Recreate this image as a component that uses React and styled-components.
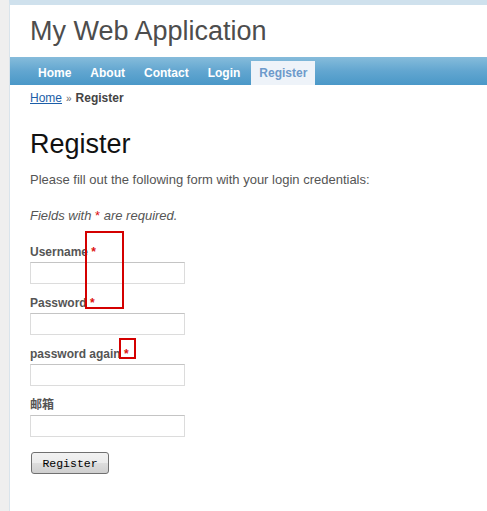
import React from 'react'
import styled, { createGlobalStyle } from 'styled-components'

const GlobalStyle = createGlobalStyle`
  html, body {
    margin: 0;
    padding: 0;
    background: #efefef;
    font-family: "Liberation Sans", Arial, sans-serif;
    font-size: 12px;
    color: #555;
  }
`;

const Page = styled.div`
  margin-left: 9px;
  min-height: 511px;
  background: #fff;
  border-left: 1px solid #d9e4ec;
  border-top: 5px solid #cfe1ed;
  position: relative;
`;

const Header = styled.div`
  height: 52px;
  display: flex;
  align-items: center;
  padding-left: 20px;
`;

const Logo = styled.div`
  font-size: 27px;
  color: #4d4d4d;
  margin-top: 1px;
`;

const MainMenu = styled.ul`
  list-style: none;
  margin: 0;
  padding: 4px 20px 0 20px;
  height: 24px;
  display: flex;
  align-items: stretch;
  gap: 3px;
  background: linear-gradient(to bottom, #86bcdb 0%, #62a6d0 50%, #4a98c8 100%);
`;

const MenuItem = styled.li`
  display: flex;
  align-items: center;
  padding: 0 8px;
  font-size: 12px;
  font-weight: bold;
  color: ${({ $active }) => ($active ? '#6d9acb' : '#fff')};
  background: ${({ $active }) => ($active ? '#eef3f9' : 'transparent')};
`;

const Breadcrumbs = styled.div`
  padding: 6px 20px 0 20px;
  font-size: 12px;
  color: #333;
  line-height: 14px;
`;

const Crumb = styled.a`
  color: #1c5ea8;
  text-decoration: underline;
`;

const Sep = styled.span`
  font-size: 10px;
  color: #666;
  margin: 0 4px 0 4px;
`;

const Current = styled.span`
  font-weight: bold;
  color: #444;
`;

const Content = styled.div`
  padding: 20px 20px 30px 20px;
`;

const Title = styled.h1`
  margin: 0;
  font-size: 27px;
  font-weight: normal;
  color: #111;
  line-height: 36px;
`;

const Intro = styled.p`
  margin: 10px 0 0 0;
  font-size: 13px;
  color: #555;
  line-height: 16px;
`;

const Note = styled.p`
  margin: 20px 0 0 0;
  font-size: 13px;
  font-style: italic;
  color: #555;
  line-height: 16px;
`;

const Req = styled.span`
  color: #d11;
  font-style: normal;
`;

const Form = styled.form`
  margin-top: 21px;
  display: flex;
  flex-direction: column;
  gap: 12px;
`;

const Row = styled.div`
  display: flex;
  flex-direction: column;
  gap: 3px;
`;

const Label = styled.label`
  font-size: 12px;
  font-weight: bold;
  color: #555;
  line-height: 14px;
  font-family: "Liberation Sans", "Noto Sans CJK SC", sans-serif;
`;

const Input = styled.input`
  box-sizing: border-box;
  width: 155px;
  height: 22px;
  margin: 0;
  border: 1px solid #dcdcdc;
  border-top-color: #c4c4c4;
  background: #fff;
  outline: none;
`;

const ButtonRow = styled.div`
  margin-top: 3px;
  padding-left: 1px;
`;

const Submit = styled.button`
  box-sizing: border-box;
  width: 78px;
  height: 22px;
  border: 1px solid #707070;
  border-radius: 3px;
  background: linear-gradient(to bottom, #f2f2f2 0%, #ebebeb 50%, #dddddd 51%, #cfcfcf 100%);
  font-family: "Liberation Mono", "Courier New", monospace;
  font-size: 11.5px;
  color: #000;
  padding: 0;
`;

const Marker = styled.div`
  position: absolute;
  border: 2px solid #d40000;
  box-sizing: border-box;
`;

const menu = ['Home', 'About', 'Contact', 'Login', 'Register'];

const fields = [
  { label: 'Username', required: true, type: 'text' },
  { label: 'Password', required: true, type: 'password' },
  { label: 'password again', required: true, type: 'password' },
  { label: '邮箱', required: false, type: 'text' },
];

function App() {
  return (
    <>
      <GlobalStyle />
      <Page>
        <Header>
          <Logo>My Web Application</Logo>
        </Header>
        <MainMenu>
          {menu.map((m) => (
            <MenuItem key={m} $active={m === 'Register'}>{m}</MenuItem>
          ))}
        </MainMenu>
        <Breadcrumbs>
          <Crumb href="#">Home</Crumb>
          <Sep>»</Sep>
          <Current>Register</Current>
        </Breadcrumbs>
        <Content>
          <Title>Register</Title>
          <Intro>Please fill out the following form with your login credentials:</Intro>
          <Note>Fields with <Req>*</Req> are required.</Note>
          <Form onSubmit={(e) => e.preventDefault()}>
            {fields.map((f) => (
              <Row key={f.label}>
                <Label>
                  {f.label}
                  {f.required && <Req> *</Req>}
                </Label>
                <Input type={f.type} />
              </Row>
            ))}
            <ButtonRow>
              <Submit type="submit">Register</Submit>
            </ButtonRow>
          </Form>
        </Content>
        <Marker style={{ left: 75, top: 226, width: 39, height: 78 }} />
        <Marker style={{ left: 109, top: 333, width: 17, height: 21 }} />
      </Page>
    </>
  )
}

export default App
